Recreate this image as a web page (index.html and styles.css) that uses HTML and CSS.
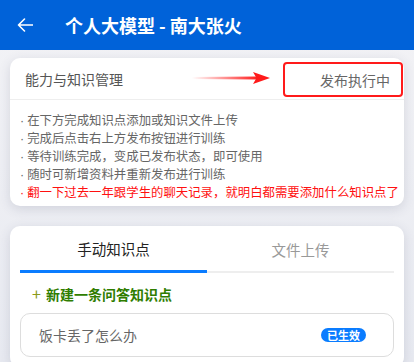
FILE: index.html
```html
<!DOCTYPE html>
<html lang="zh-CN">
<head>
    <meta charset="UTF-8">
    <meta name="viewport" content="width=device-width, initial-scale=1.0">
    <title>个人大模型 - 南大张火</title>
    <link rel="stylesheet" href="styles.css">
</head>
<body>

    <div class="top__bar">
        <svg class="top__back" width="16" height="14" viewBox="0 0 16 14">
            <path d="M15.5 7H1.5M7.5 1L1.5 7L7.5 13" fill="none" stroke="#fff" stroke-width="1.6" stroke-linecap="round" stroke-linejoin="round"/>
        </svg>
        <h1 class="top__title">个人大模型 - 南大张火</h1>
    </div>

    <div class="page">

        <div class="card">
            <div class="card__head">
                <span class="card__name">能力与知识管理</span>
                <svg class="card__arrow" width="80" height="14" viewBox="0 0 80 14">
                    <defs>
                        <linearGradient id="fade" x1="0" x2="1" y1="0" y2="0">
                            <stop offset="0" stop-color="#ff2a2a" stop-opacity="0"/>
                            <stop offset="1" stop-color="#ff1a1a"/>
                        </linearGradient>
                    </defs>
                    <path d="M0 6L66 5.4L66 8.6L0 8Z" fill="url(#fade)"/>
                    <path d="M61 1L78 7L61 13L64.5 7Z" fill="#ff1a1a"/>
                </svg>
                <span class="card__status">发布执行中</span>
            </div>
            <ul class="tips">
                <li>在下方完成知识点添加或知识文件上传</li>
                <li>完成后点击右上方发布按钮进行训练</li>
                <li>等待训练完成，变成已发布状态，即可使用</li>
                <li>随时可新增资料并重新发布进行训练</li>
                <li class="tips__hot">翻一下过去一年跟学生的聊天记录，就明白都需要添加什么知识点了</li>
            </ul>
        </div>

        <div class="card card--list">
            <div class="tabs">
                <div class="tabs__item tabs__item--on">手动知识点</div>
                <div class="tabs__item">文件上传</div>
            </div>
            <div class="add__row"><span class="add__plus">+</span>新建一条问答知识点</div>
            <div class="qa">
                <span class="qa__text">饭卡丢了怎么办</span>
                <span class="qa__badge">已生效</span>
            </div>
        </div>

    </div>

</body>
</html>
```

FILE: styles.css
```css
body {
    margin: 0;
    font-family: "Noto Sans CJK SC", "Noto Sans", sans-serif;
    background: linear-gradient(180deg, #f3f3f6 0%, #e8eaf1 100%);
    height: 362px;
    overflow: hidden;
}

.top__bar {
    height: 50px;
    background-color: #0062d9;
    display: flex;
    align-items: center;
}

.top__back {
    margin-left: 17px;
    margin-right: 32px;
}

.top__title {
    margin: 0;
    color: #fff;
    font-size: 18px;
    font-weight: bold;
}

.page {
    padding: 8px 10px 0 10px;
}

.card {
    background-color: #fff;
    border-radius: 10px;
    box-shadow: 0 3px 12px rgba(60, 70, 100, 0.16);
}

.card--list {
    margin-top: 20px;
    padding: 0 10px 10px 10px;
}

.card__head {
    position: relative;
    height: 41px;
    display: flex;
    align-items: center;
    justify-content: space-between;
    padding-left: 15px;
    padding-right: 1px;
    border-bottom: 1px solid #eeeeee;
}

.card__name {
    font-size: 14px;
    color: #555;
}

.card__arrow {
    position: absolute;
    left: 182px;
    top: 13px;
}

.card__status {
    box-sizing: border-box;
    width: 120px;
    height: 35px;
    border: 2px solid #ff1a1a;
    border-radius: 4px;
    font-size: 14px;
    color: #666;
    display: flex;
    align-items: center;
    justify-content: flex-end;
    padding-right: 11px;
    margin-top: 2px;
}

.tips {
    list-style: none;
    margin: 0;
    padding: 11px 8px 5px 10px;
    font-size: 12.4px;
    line-height: 18px;
    color: #666;
}

.tips li {
    white-space: nowrap;
    height: 18px;
    overflow: visible;
}

.tips li::before {
    content: "·";
    font-family: "Liberation Sans", sans-serif;
    margin-right: 3px;
}

.tips__hot {
    color: #ff1010;
}

.tabs {
    display: flex;
    height: 47px;
}

.tabs__item {
    flex: 1;
    display: flex;
    align-items: center;
    justify-content: center;
    font-size: 14.5px;
    color: #999;
    border-bottom: 2px solid #eeeeee;
    padding-top: 2px;
}

.tabs__item--on {
    color: #222;
    border-bottom: 3px solid #0a7cff;
    padding-top: 0;
}

.add__row {
    font-size: 14px;
    font-weight: bold;
    color: #2f7d00;
    padding: 10px 0 0 12px;
    height: 40px;
    line-height: 20px;
    box-sizing: border-box;
}

.add__plus {
    color: #8a9a1a;
    font-weight: normal;
    font-size: 16px;
    margin-right: 5px;
}

.qa {
    box-sizing: border-box;
    height: 44px;
    border: 1px solid #dddddd;
    border-radius: 10px;
    display: flex;
    align-items: center;
    justify-content: space-between;
    padding: 0 27px 0 18px;
}

.qa__text {
    font-size: 14px;
    color: #666;
}

.qa__badge {
    background-color: #0a7cff;
    color: #fff;
    font-size: 11px;
    font-weight: bold;
    line-height: 14px;
    padding: 0 6px;
    border-radius: 8px;
}
```
